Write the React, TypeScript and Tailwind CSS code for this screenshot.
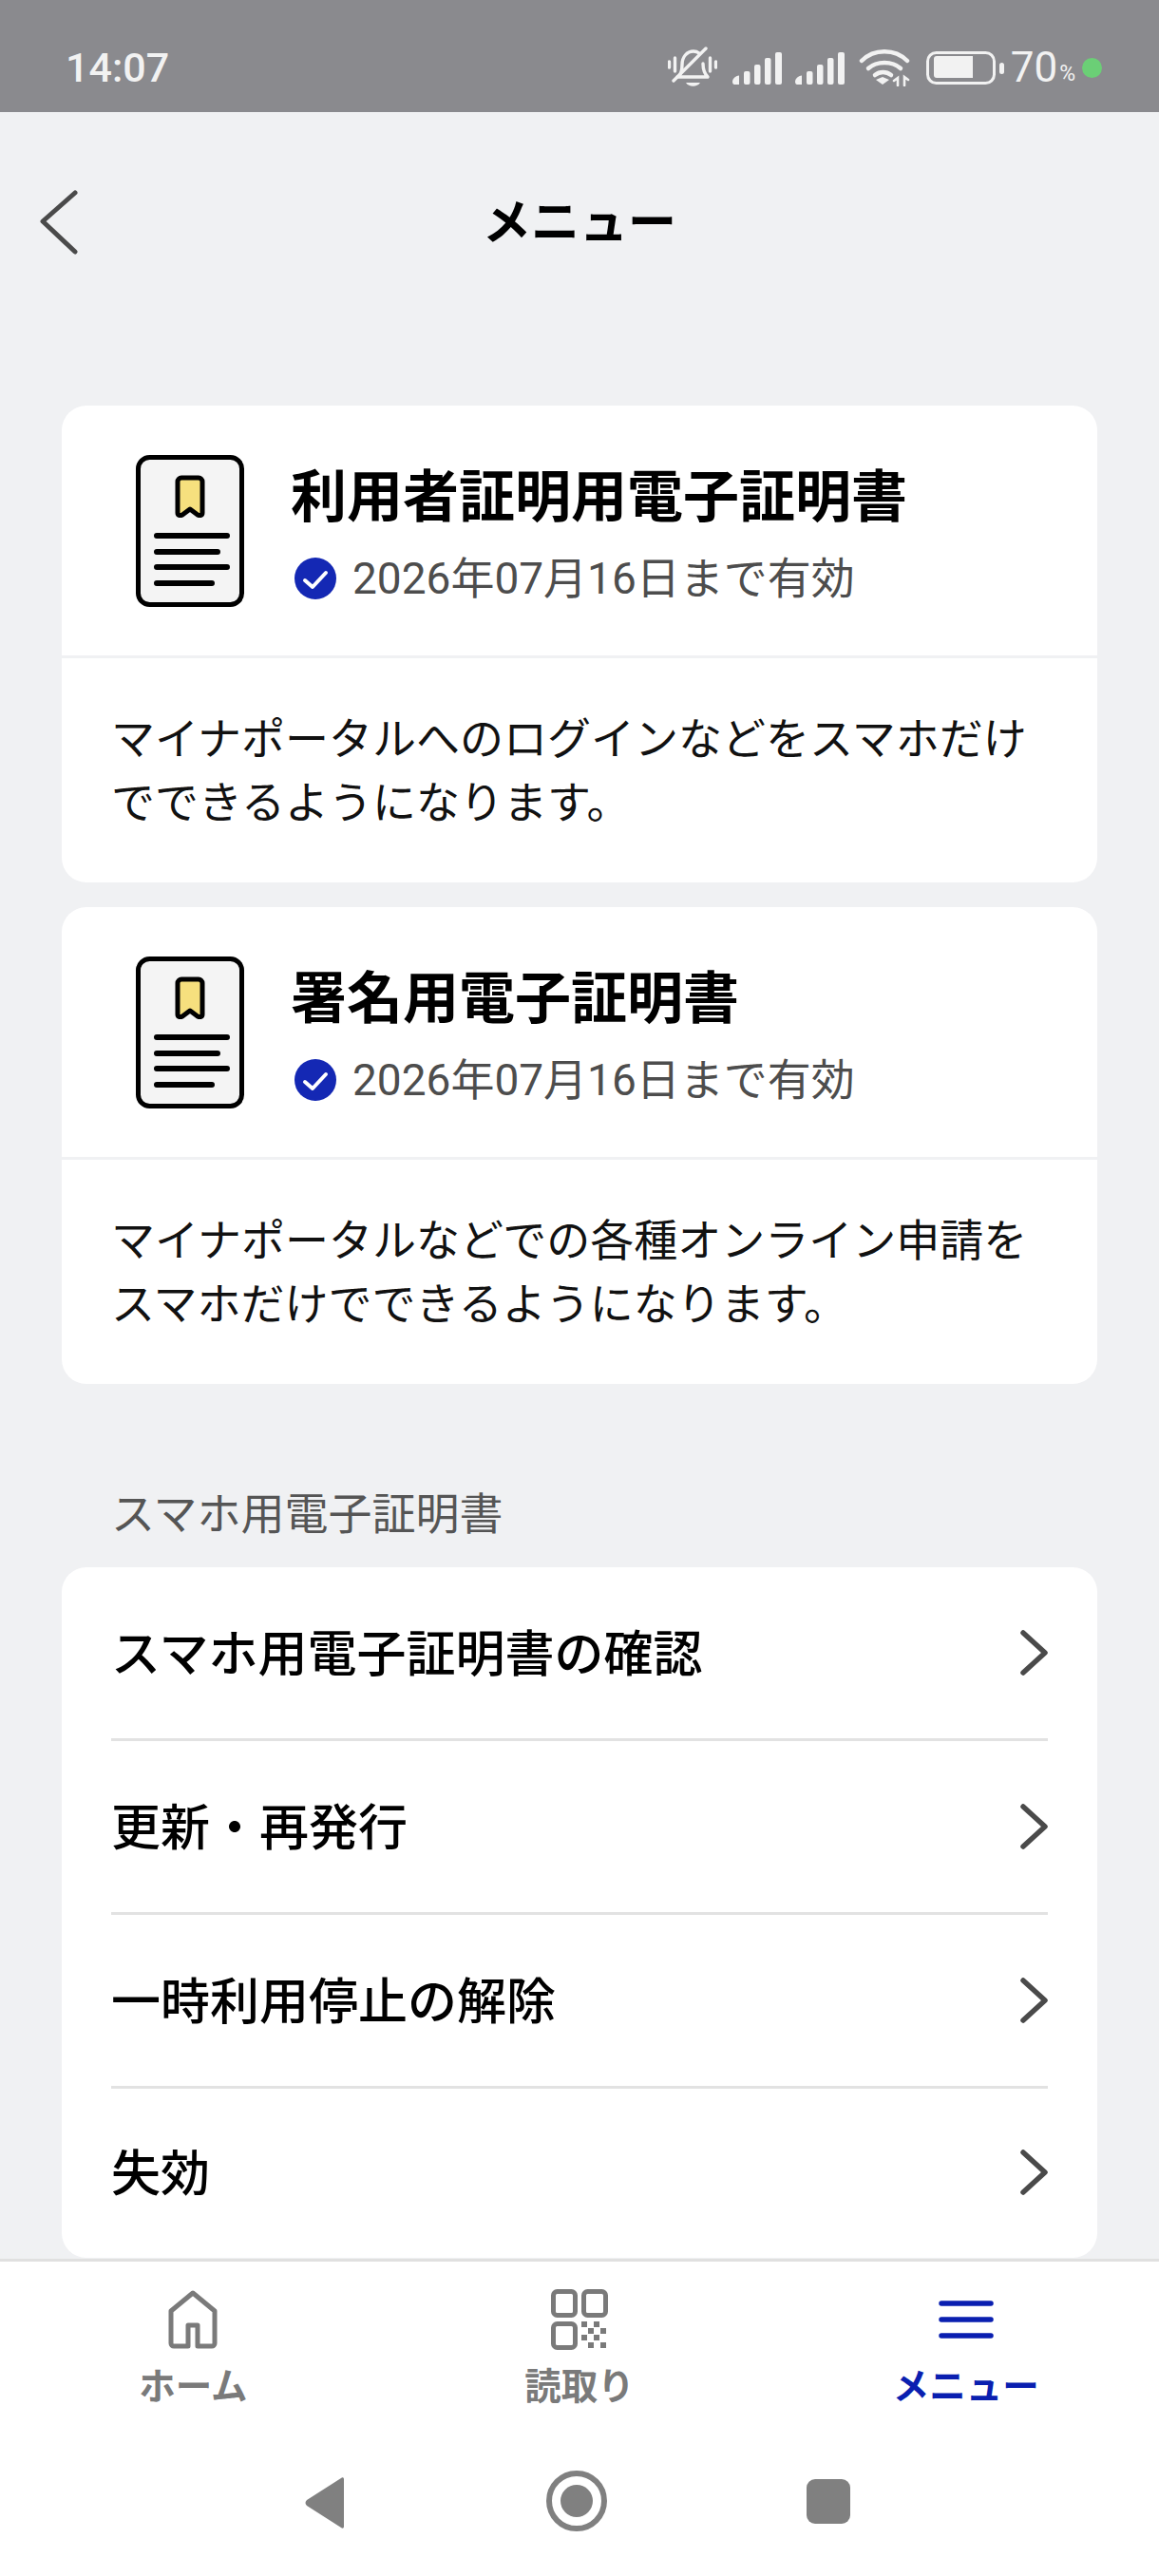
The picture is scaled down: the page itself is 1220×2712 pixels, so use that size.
const FONT = "font-['Roboto','Noto_Sans_CJK_JP',sans-serif]";

function BellOff() {
  return (
    <svg width="52" height="44" viewBox="0 0 52 44" fill="none" stroke="#f2f2f2" strokeWidth="3.4" strokeLinecap="round" strokeLinejoin="round">
      <path d="M1.5 16v6M7.5 12v14M44.5 12v14M50.5 16v6" />
      <path d="M11 32c3-3 4-7 4-13 0-8 5-14 12-14 2 0 4 .5 6 2M37 18c0 6 1 10 5 14H10" />
      <path d="M6 36 40 2" />
      <path d="M19 38c3 5 12 5 15 0z" fill="#f2f2f2" stroke="none" />
    </svg>
  );
}

function Signal() {
  return (
    <svg width="52" height="34" viewBox="0 0 52 34" fill="#f2f2f2">
      <path d="M0 31c0-3 3-6 7-6.500V34H2c-1 0-2-1-2-3z" />
      <rect x="12" y="20" width="6.500" height="14" rx="2" />
      <rect x="23" y="13" width="6.500" height="21" rx="2" />
      <rect x="34" y="6" width="6.500" height="28" rx="2" />
      <rect x="45" y="0" width="7" height="34" rx="2" />
    </svg>
  );
}

function Wifi() {
  return (
    <svg width="54" height="40" viewBox="0 0 54 40" fill="none" stroke="#f2f2f2" strokeWidth="4.5" strokeLinecap="round">
      <path d="M3 13C16 0 38 0 51 13" />
      <path d="M10 21c9-8 25-8 34 0" />
      <path d="M17 28c5-4 12-4 17 0" />
      <path d="M18 33l7-3 7 3-7 5z" fill="#f2f2f2" stroke="none" />
      <path d="M41 39v-8l-4 3M48 39v-9l4 3" strokeWidth="2.6" />
    </svg>
  );
}

function Battery() {
  return (
    <svg width="82" height="35" viewBox="0 0 82 35" fill="none">
      <rect x="1.500" y="1.500" width="70" height="32" rx="9" stroke="#f2f2f2" strokeWidth="3" />
      <path d="M8 8a3 3 0 0 1 3-3h38v23H11a3 3 0 0 1-3-3z" fill="#f2f2f2" />
      <rect x="77" y="12" width="5" height="12" rx="2.500" fill="#f2f2f2" />
    </svg>
  );
}

function CertIcon() {
  return (
    <svg width="114" height="160" viewBox="0 0 114 160" fill="none" className="shrink-0">
      <rect x="2.500" y="2.500" width="109" height="155" rx="12" fill="#f4f4f4" stroke="#000" strokeWidth="5" />
      <path d="M44 28a4 4 0 0 1 4-4h18a4 4 0 0 1 4 4v33c0 3-3 3-5 2l-8-6-8 6c-2 1-5 1-5-2z" fill="#f6e07e" stroke="#000" strokeWidth="5" strokeLinejoin="round" />
      <g stroke="#000" strokeWidth="6" strokeLinecap="round">
        <path d="M22 85h74M22 102h64M22 118h74M22 135h58" />
      </g>
    </svg>
  );
}

function CheckBadge() {
  return (
    <svg width="44" height="44" viewBox="0 0 44 44" className="shrink-0">
      <circle cx="22" cy="22" r="22" fill="#1428b4" />
      <path d="M11 24l8 7 14-15" fill="none" stroke="#fff" strokeWidth="4" strokeLinecap="round" strokeLinejoin="round" />
    </svg>
  );
}

function Chevron() {
  return (
    <svg width="30" height="48" viewBox="0 0 30 48" fill="none" stroke="#4a4a4a" strokeWidth="5.500" strokeLinecap="round" strokeLinejoin="round">
      <path d="M4 3l23 21L4 45" />
    </svg>
  );
}

function CertCard({ title, body }: { title: string; body: string[] }) {
  return (
    <section className="rounded-[26px] bg-white">
      <div className="flex h-[266px] items-center gap-[49px] border-b-[3px] border-[#f0f1f3] pl-[78px]">
        <CertIcon />
        <div className="flex flex-col gap-[21px] pt-[8px]">
          <h2 className="text-[59px] font-bold leading-[72px] text-black">{title}</h2>
          <div className="ml-[4px] flex items-center gap-[17px]">
            <CheckBadge />
            <span className="text-[46px] leading-[56px] text-[#4d4d4d]">2026年07月16日まで有効</span>
          </div>
        </div>
      </div>
      <div className="flex h-[236px] flex-col justify-center px-[52px] pt-[2px] text-[46px] leading-[67px] text-[#111]">
        {body.map((line) => (
          <p key={line} className="whitespace-nowrap">{line}</p>
        ))}
      </div>
    </section>
  );
}

const ROWS = ["スマホ用電子証明書の確認", "更新・再発行", "一時利用停止の解除", "失効"];

export default function App() {
  return (
    <div className={`flex h-[2712px] w-[1220px] flex-col overflow-hidden bg-[#f0f1f3] ${FONT}`}>
      <header className="flex h-[118px] shrink-0 items-center justify-between bg-[#8a8a8e] pl-[69px] pr-[60px] pt-[24px] text-[#f2f2f2]">
        <span className="text-[43px] font-medium">14:07</span>
        <div className="flex items-center">
          <BellOff />
          <div className="ml-[16px] mt-[2px]"><Signal /></div>
          <div className="ml-[14px] mt-[2px]"><Signal /></div>
          <div className="ml-[15px]"><Wifi /></div>
          <div className="ml-[17px]"><Battery /></div>
          <span className="ml-[7px] text-[44px] leading-none">70</span>
          <span className="ml-[2px] mt-[12px] text-[23px] leading-none">%</span>
          <span className="ml-[7px] h-[21px] w-[21px] rounded-full bg-[#6bcf76]" />
        </div>
      </header>

      <div className="relative flex h-[232px] shrink-0 items-center justify-center">
        <svg width="42" height="68" viewBox="0 0 42 68" fill="none" stroke="#4a4a4a" strokeWidth="5" strokeLinecap="round" strokeLinejoin="round" className="absolute left-[41px] top-[116px] -translate-y-1/2">
          <path d="M38 3 4 33l34 32" />
        </svg>
        <h1 className="text-[51px] font-bold leading-none text-black">メニュー</h1>
      </div>

      <main className="flex min-h-0 flex-1 flex-col overflow-hidden px-[65px] pt-[77px]">
        <div className="flex flex-col gap-[26px]">
          <CertCard title="利用者証明用電子証明書" body={["マイナポータルへのログインなどをスマホだけ", "でできるようになります。"]} />
          <CertCard title="署名用電子証明書" body={["マイナポータルなどでの各種オンライン申請を", "スマホだけでできるようになります。"]} />
        </div>
        <p className="mt-[109px] px-[52px] text-[46px] leading-[56px] text-[#555]">スマホ用電子証明書</p>
        <ul className="mt-[28px] rounded-[26px] bg-white px-[52px]">
          {ROWS.map((row, i) => (
            <li key={row} className={`flex items-center justify-between ${i < ROWS.length - 1 ? "h-[183px] border-b-[3px] border-[#e2e2e2]" : "h-[178px] pb-[2px]"}`}>
              <span className="pt-[5px] text-[52px] font-medium text-black">{row}</span>
              <Chevron />
            </li>
          ))}
        </ul>
      </main>

      <nav className="shrink-0 border-t-[3px] border-[#e0e0e0] bg-white">
        <div className="grid h-[201px] grid-cols-3 pt-[29px]">
          <div className="flex flex-col items-center">
            <div className="flex h-[64px] items-center">
              <svg width="52" height="62" viewBox="0 0 52 62" fill="none" stroke="#7a7a7a" strokeWidth="5" strokeLinejoin="round">
                <path d="M26 3 3 22v34a3 3 0 0 0 3 3h15V37h10v22h15a3 3 0 0 0 3-3V22z" />
              </svg>
            </div>
            <span className="mt-[14px] text-[38.500px] font-bold leading-[50px] text-[#7a7a7a]">ホーム</span>
          </div>
          <div className="flex flex-col items-center">
            <div className="flex h-[64px] items-center">
              <svg width="60" height="64" viewBox="0 0 60 64" fill="none" stroke="#7a7a7a" strokeWidth="5">
                <rect x="2.500" y="2.500" width="23" height="25" rx="4" />
                <rect x="34.500" y="2.500" width="23" height="25" rx="4" />
                <rect x="2.500" y="36.500" width="23" height="25" rx="4" />
                <path d="M32 40h6v-6h-6zM45 40h6v-6h-6zM39 47h6v-6h-6zM52 47h6v-6h-6zM32 54h6v-6h-6zM45 54h6v-6h-6zM39 62h6v-6h-6zM52 62h6v-6h-6z" fill="#7a7a7a" stroke="none" />
              </svg>
            </div>
            <span className="mt-[14px] text-[38.500px] font-bold leading-[50px] text-[#7a7a7a]">読取り</span>
          </div>
          <div className="flex flex-col items-center">
            <div className="flex h-[64px] items-center">
              <svg width="58" height="40" viewBox="0 0 58 40" fill="none" stroke="#0a1fb0" strokeWidth="5.500" strokeLinecap="round">
                <path d="M3 3h52M3 20h52M3 37h52" />
              </svg>
            </div>
            <span className="mt-[14px] text-[38.500px] font-bold leading-[50px] text-[#0a1fb0]">メニュー</span>
          </div>
        </div>
        <div className="flex h-[130px] items-start justify-center pt-[24px]">
          <svg width="42" height="54" viewBox="0 0 42 54" className="ml-[-4px] mt-[2px]">
            <path d="M41 2v50c0 2-2 2-3 1L2 30c-2-2-2-4 0-6L38 1c1-1 3-1 3 1z" fill="#808080" />
          </svg>
          <svg width="64" height="64" viewBox="0 0 64 64" className="ml-[212px] mt-[-5px]" fill="none">
            <circle cx="32" cy="32" r="29" stroke="#808080" strokeWidth="6" />
            <circle cx="32" cy="32" r="17" fill="#808080" />
          </svg>
          <div className="ml-[210px] mt-[4px] h-[47px] w-[46px] rounded-[9px] bg-[#808080]" />
        </div>
      </nav>
    </div>
  );
}
